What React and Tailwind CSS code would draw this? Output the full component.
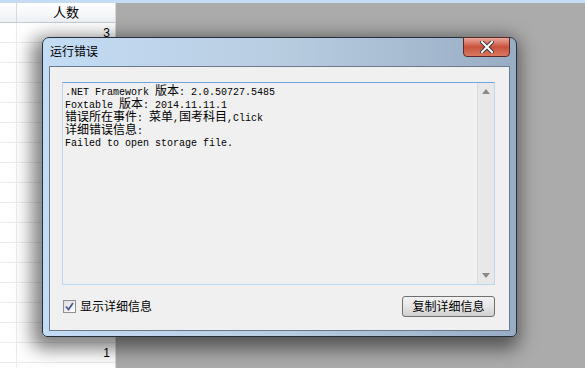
import React from "react";

const ui = { fontFamily: "'Liberation Sans', 'Noto Sans CJK SC', sans-serif" };
const mono = { fontFamily: "'Liberation Mono', 'Noto Sans CJK SC', monospace" };

const C = ({ children }) => <span className="text-[12px]">{children}</span>;

const GridPanel = () => {
  const rows = Array.from({ length: 18 }, (_, i) => i);
  return (
    <div className="w-[116px] bg-white border-r border-[#d8d8d8] flex flex-col">
      <div className="h-[20px] flex shrink-0 border-b border-[#c5cdd8] bg-gradient-to-b from-[#ffffff] to-[#eef1f5]">
        <div className="w-[17px] border-r border-[#d5dbe3]" />
        <div className="flex-1 flex items-center justify-center text-[13px] text-black" style={ui}>
          人数
        </div>
      </div>
      {rows.map((i) => (
        <div key={i} className="h-[20px] flex shrink-0 border-b border-[#ececec]">
          <div className="w-[17px] border-r border-[#ececec]" />
          <div className="flex-1 flex items-center justify-end pr-[5px] text-[12px] text-black" style={ui}>
            {i === 0 ? "3" : i === 16 ? "1" : ""}
          </div>
        </div>
      ))}
    </div>
  );
};

const CloseButton = () => (
  <div className="absolute right-[6px] top-[-1px] w-[47px] h-[20px] rounded-b-[4px] border border-[#5a2a26] bg-gradient-to-b from-[#e8a89c] via-[#c9503e] to-[#d87a60] flex items-center justify-center">
    <svg width="14" height="12" viewBox="0 0 14 12">
      <path d="M2 1 L12 11 M12 1 L2 11" stroke="#3b3b3b" strokeWidth="4" strokeLinecap="square" />
      <path d="M2 1 L12 11 M12 1 L2 11" stroke="#ffffff" strokeWidth="2" strokeLinecap="square" />
    </svg>
  </div>
);

const Checkbox = () => (
  <div className="w-[13px] h-[13px] border border-[#8e8f8f] bg-gradient-to-br from-[#dcdcdc] to-[#ffffff] flex items-center justify-center">
    <svg width="9" height="9" viewBox="0 0 9 9">
      <path d="M1 4.5 L3.5 7.5 L8 1" fill="none" stroke="#4a5d95" strokeWidth="1.8" />
    </svg>
  </div>
);

const Scrollbar = () => (
  <div className="w-[17px] h-full bg-[#e8e8e8] border-l border-[#dcdcdc] flex flex-col justify-between items-center py-[6px]">
    <svg width="8" height="5" viewBox="0 0 8 5">
      <path d="M0 5 L4 0 L8 5 Z" fill="#8a8a8a" />
    </svg>
    <svg width="8" height="5" viewBox="0 0 8 5">
      <path d="M0 0 L4 5 L8 0 Z" fill="#8a8a8a" />
    </svg>
  </div>
);

const ErrorDialog = () => (
  <div className="absolute left-[42px] top-[37px] w-[475px] h-[300px] rounded-t-[7px] rounded-b-[5px] border border-[#26303c] bg-gradient-to-r from-[#c3dcf4] via-[#b9cde1] to-[#98adc4] shadow-[-4px_6px_18px_6px_rgba(0,0,0,0.5)]">
    <div className="relative h-[28px] flex items-center pl-[7px] text-[12px] text-black" style={ui}>
      运行错误
      <CloseButton />
    </div>
    <div className="mx-[6px] h-[265px] border border-[#6a7a8c] bg-[#f0f0f0] flex flex-col">
      <div className="mt-[15px] ml-[12px] w-[433px] h-[203px] border border-[#bcd6ee] border-t-[#6ea6de] bg-[#f0f0f0] flex">
        <div className="flex-1 pl-[2px] pt-[3px] text-[10px] leading-[12px] text-black whitespace-pre" style={mono}>
          <div>.NET Framework <C>版本</C>: 2.0.50727.5485</div>
          <div>Foxtable <C>版本</C>: 2014.11.11.1</div>
          <div><C>错误所在事件</C>: <C>菜单</C>,<C>国考科目</C>,Click</div>
          <div><C>详细错误信息</C>:</div>
          <div>Failed to open storage file.</div>
        </div>
        <Scrollbar />
      </div>
      <div className="flex items-center justify-between ml-[13px] mr-[14px] mt-[11px]">
        <div className="flex items-center gap-[4px] text-[12px] text-black" style={ui}>
          <Checkbox />
          <span>显示详细信息</span>
        </div>
        <div className="w-[93px] h-[21px] rounded-[3px] border border-[#707070] bg-gradient-to-b from-[#f2f2f2] via-[#e6e6e6] to-[#cfcfcf] flex items-center justify-center text-[12px] text-black" style={ui}>
          复制详细信息
        </div>
      </div>
    </div>
  </div>
);

export default function App() {
  return (
    <div className="relative w-[585px] h-[368px] overflow-hidden bg-[#ababab] flex flex-col">
      <div className="h-[3px] shrink-0 bg-[#c5dcf3]" />
      <div className="flex-1 flex overflow-hidden">
        <GridPanel />
        <div className="flex-1 bg-[#ababab]" />
      </div>
      <ErrorDialog />
    </div>
  );
}
